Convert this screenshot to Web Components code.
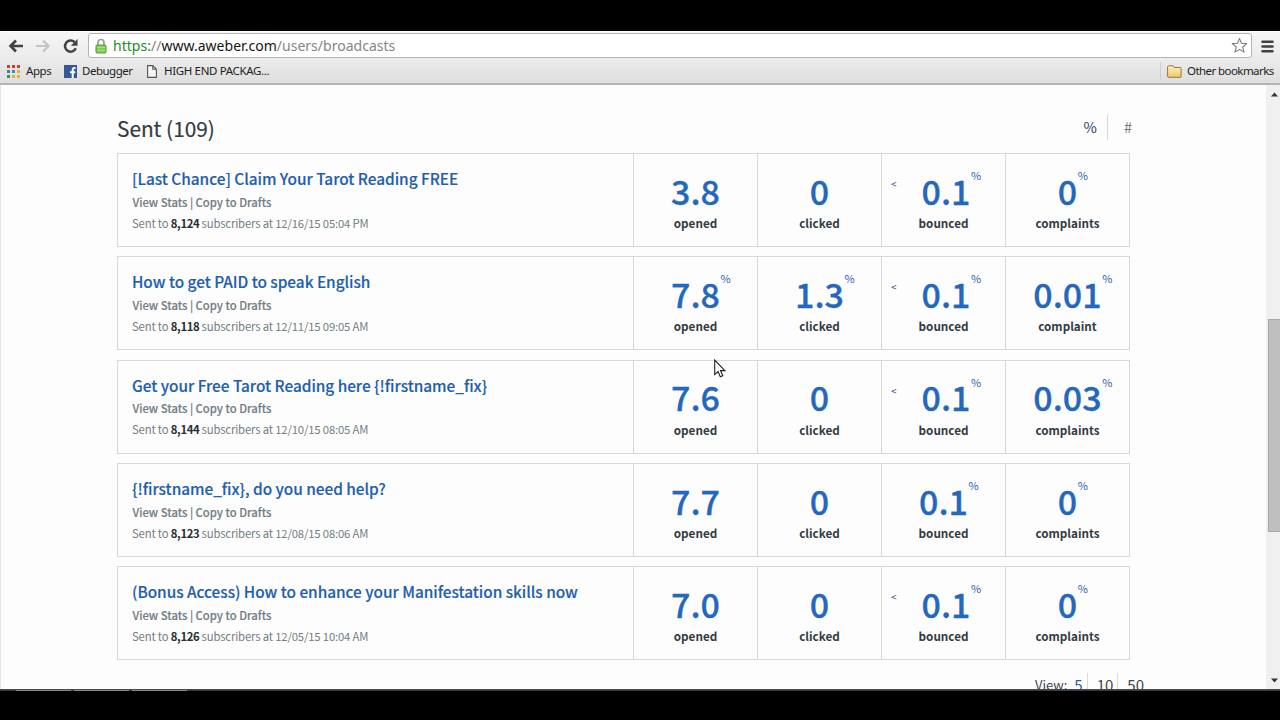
<!DOCTYPE html>
<html lang="en">
<head>
<meta charset="utf-8">
<title>Broadcasts</title>
<style>
html,body{margin:0;height:100%;background:#000;overflow:hidden}
body{--ui:"Noto Sans","Open Sans",sans-serif;--body:"Noto Sans CJK SC","Noto Sans",sans-serif;font-family:var(--body)}
</style>
</head>
<body>
<browser-window>
  <browser-toolbar slot="toolbar"></browser-toolbar>
  <bookmarks-bar slot="bookmarks"></bookmarks-bar>
  <broadcast-page></broadcast-page>
  <scroll-bar slot="scroll"></scroll-bar>
</browser-window>
<script>
const define = (name, html, setup) => customElements.define(name, class extends HTMLElement {
  constructor(){ super(); this.attachShadow({mode:'open'}); }
  connectedCallback(){
    this.shadowRoot.innerHTML = html;
    if (setup) setup(this.shadowRoot, this);
  }
});

define('browser-window', `
<style>
:host{display:flex;flex-direction:column;width:1280px;height:720px;box-sizing:border-box;padding:31px 0 29px;background:#000;position:relative}
.view{flex:1;display:flex;min-height:0;background:#fdfdfd;border-left:1px solid #e4e4e4;overflow:hidden}
.main{flex:1;min-width:0;overflow:hidden}
.edge{display:flex;gap:3px;height:2px;padding-left:16px;background:linear-gradient(#50545b,#2d3135)}
.edge i{width:55px;height:1px;margin-top:1px;background:#888}
.cursor{position:absolute;left:714px;top:359px}
</style>
<slot name="toolbar"></slot><slot name="bookmarks"></slot>
<div class="view"><div class="main"><slot></slot></div><slot name="scroll"></slot></div>
<div class="edge"><i></i><i></i><i></i></div>
<svg class="cursor" width="13" height="20" viewBox="0 0 13 20"><path d="M.7 1v14.6l3.3-3.1 2.3 5.3 2.5-1.1-2.3-5.1h4.4z" fill="#fff" stroke="#222" stroke-width="1.1"/></svg>`);

define('browser-toolbar', `
<style>
:host{display:flex;align-items:center;height:28px;background:linear-gradient(#f6f6f6,#ebebeb);border-top:1px solid #fff;box-sizing:border-box;font-family:var(--ui)}
svg{display:block;flex:none}
.nav{display:flex;align-items:center;gap:11px;padding:0 0 0 8px;width:88px;box-sizing:border-box}
.field{display:flex;align-items:center;width:1164px;height:25px;box-sizing:border-box;border:1px solid #b4b4b4;border-radius:3px;background:#fff;padding:0 3px 0 6px}
.url{flex:1;font-size:14px;line-height:22px;color:#858585;margin-left:6px;letter-spacing:.02px;white-space:pre;margin-top:1px}
.s{color:#188f1d}.h{color:#151515}
.menu{margin:1px 0 0 9px}
</style>
<div class="nav">
<svg width="16" height="14" viewBox="0 0 16 14" fill="none" stroke="#424242" stroke-width="2.6"><path d="M15 7H3M8 1.500 2.500 7 8 12.500"/></svg>
<svg width="16" height="14" viewBox="0 0 16 14" fill="none" stroke="#c4c4c4" stroke-width="2.2"><path d="M1 7h12M8 1.500 13.500 7 8 12.500"/></svg>
<svg width="16" height="16" viewBox="0 0 16 16"><path d="M13.800 10.200A5.600 5.600 0 1 1 12.500 4" fill="none" stroke="#424242" stroke-width="2.5"/><path d="M15.500 1v6.700H8.900z" fill="#424242"/></svg>
</div>
<div class="field">
<svg width="12" height="16" viewBox="0 0 12 16"><path d="M3 8V4.500a3 3 0 0 1 6 0V8" fill="none" stroke="#999" stroke-width="1.700"/><rect x="1" y="7" width="10" height="8" rx="1" fill="#82cf50" stroke="#5a9a38"/><path d="M2 9.500h8M2 12.500h8" stroke="#a8e07d"/></svg>
<span class="url"><span class="s">https:</span>//<span class="h">www.aweber.com</span>/users/broadcasts</span>
<svg width="17" height="17" viewBox="0 0 18 18"><path d="m9 1.500 2.100 5.100 5.600.4-4.300 3.600 1.400 5.400L9 13.100 4.200 16l1.400-5.400L1.300 7l5.600-.4z" fill="#fff" stroke="#777" stroke-width="1.100" stroke-linejoin="round"/></svg>
</div>
<svg class="menu" width="13" height="13" viewBox="0 0 13 13" stroke="#424242" stroke-width="2.600" stroke-linecap="round"><path d="M1.500 1.800h10M1.500 6.500h10M1.500 11.200h10"/></svg>`);

define('bookmarks-bar', `
<style>
:host{display:flex;align-items:center;height:26px;box-sizing:border-box;background:linear-gradient(#ebebeb,#dedede);border-bottom:2px solid #b4b4b4;font:11.500px/18px var(--ui);color:#222;padding:0 6px 0 7px;white-space:nowrap}
svg{display:block;flex:none}
span{display:block}
.apps{width:26px;margin:0 12px 0 6px;letter-spacing:-.4px}.dbg{width:52px;margin:0 13px 0 5px;letter-spacing:-.5px}.hi{margin-left:7px;letter-spacing:-.34px}
.ob{width:87px;letter-spacing:-.57px}
.other{display:flex;align-items:center;gap:5px;margin-left:auto;padding-left:6px;border-left:1px solid #ccd0dc}
</style>
<svg width="13" height="13" viewBox="0 0 13 13"><path fill="#cf3f36" d="M0 0h3v3H0zM5 0h3v3H5zM10 0h3v3h-3z"/><path fill="#36916a" d="M0 5h3v3H0zM0 10h3v3H0z"/><path fill="#4082d0" d="M5 5h3v3H5z"/><path fill="#e6b338" d="M10 5h3v3h-3zM5 10h3v3H5zM10 10h3v3h-3z"/></svg>
<span class="apps">Apps</span>
<svg width="13" height="13" viewBox="0 0 13 13"><path fill="#35579c" d="M0 0h13v13H0z"/><path d="M11.500 3H10.500Q8.700 3 8.700 5v8M6 7.300h5.300" fill="none" stroke="#fff" stroke-width="2"/></svg>
<span class="dbg">Debugger</span>
<svg width="10" height="13" viewBox="0 0 10 13"><path d="M.6.6h5.200l3.600 3.600v8.200H.6zM5.800.6v3.600h3.600" fill="#f5f5f5" stroke="#555" stroke-width="1.100"/></svg>
<span class="hi">HIGH END PACKAG...</span>
<div class="other"><svg width="15" height="13" viewBox="0 0 15 13"><defs><linearGradient id="f" x2="0" y2="1"><stop stop-color="#fff0b8"/><stop offset="1" stop-color="#efc76b"/></linearGradient></defs><path d="M.6 11.400V1.700q0-.9.9-.9h4.500q.7 0 .9.800l.3.900h6q.9 0 .9.900v8q0 .9-.9.900H1.500q-.9 0-.9-.9z" fill="url(#f)" stroke="#99773c"/></svg><span class="ob">Other bookmarks</span></div>`);

define('scroll-bar', `
<style>
:host{display:flex;flex-direction:column;align-items:center;width:14px;flex:none;box-sizing:border-box;height:100%;background:#f0f0f0;padding:7px 0 6px 2px}
.track{flex:1;width:100%;padding-top:222px;box-sizing:border-box}
.thumb{height:213px;box-sizing:border-box;background:#bfbfbf;border:1px solid #a9a9a9;border-right:0}
svg{display:block}
</style>
<svg width="7" height="5" viewBox="0 0 7 5"><path d="M0 4.500h7L3.500.5z" fill="#333"/></svg>
<div class="track"><div class="thumb"></div></div>
<svg width="7" height="5" viewBox="0 0 7 5"><path d="M0 .5h7L3.500 4.500z" fill="#333"/></svg>`);

define('stat-cell', `
<style>
:host{display:block;width:124px;box-sizing:border-box;border-left:1px solid #d8d8d8;text-align:center;position:relative;padding-top:12.600px}
.n{display:block;width:max-content;margin:0 auto;position:relative;font-size:34px;font-weight:500;line-height:48px;color:#2468bd;-webkit-text-stroke:.3px #2468bd}
.n.lt{left:2.500px}
.pct{position:absolute;left:100%;top:1.400px;margin-left:.5px;font-size:11px;line-height:14px;font-weight:400;-webkit-text-stroke:0;color:#2c5fae}
.less{position:absolute;left:9px;top:23px;font-size:10px;line-height:14px;color:#2c4f80}
.l{font-size:11.700px;line-height:18px;font-weight:700;color:#333c43;display:block;margin-top:-.6px}
</style>`, (root, host) => {
  const less = host.hasAttribute('less'), pct = host.hasAttribute('percent');
  root.innerHTML += `${less ? '<span class="less">&lt;</span>' : ''}<span class="n${less ? ' lt' : ''}">${host.getAttribute('value')}${pct ? '<span class="pct">%</span>' : ''}</span><span class="l">${host.getAttribute('label')}</span>`;
});

define('broadcast-row', `
<style>
:host{display:flex;height:94px;box-sizing:border-box;border:1px solid #d8d8d8;background:#fdfdfd}
.info{width:515px;box-sizing:border-box;padding:12px 0 0 14px;white-space:nowrap}
.t{font-size:15.400px;line-height:24px;font-weight:500;color:#1f5fae;letter-spacing:-.03px;-webkit-text-stroke:.15px #1f5fae}
.a{font-size:11.300px;line-height:20px;margin-top:1.700px;font-weight:500;color:#737d84;-webkit-text-stroke:.15px #737d84;padding-left:.5px;letter-spacing:-.02px}
.m{font-size:11.300px;line-height:20px;margin-top:1px;color:#737d84;letter-spacing:-.16px}
b{font-weight:700;color:#272f35;letter-spacing:-.4px}
</style>
<div class="info"><div class="t"></div><div class="a">View Stats | Copy to Drafts</div><div class="m">Sent to <b></b> subscribers at <span></span></div></div>
<slot></slot>`, (root, host) => {
  root.querySelector('.t').textContent = host.getAttribute('subject');
  root.querySelector('b').textContent = host.getAttribute('count');
  root.querySelector('.m span').textContent = host.getAttribute('date');
});

const broadcasts = [
  ['[Last Chance] Claim Your Tarot Reading FREE','8,124','12/16/15 05:04 PM',['3.8',0],['0',0],['0.1',1,1],['0',1],'complaints'],
  ['How to get PAID to speak English','8,118','12/11/15 09:05 AM',['7.8',1],['1.3',1],['0.1',1,1],['0.01',1],'complaint'],
  ['Get your Free Tarot Reading here {!firstname_fix}','8,144','12/10/15 08:05 AM',['7.6',0],['0',0],['0.1',1,1],['0.03',1],'complaints'],
  ['{!firstname_fix}, do you need help?','8,123','12/08/15 08:06 AM',['7.7',0],['0',0],['0.1',1,0],['0',1],'complaints'],
  ['(Bonus Access) How to enhance your Manifestation skills now','8,126','12/05/15 10:04 AM',['7.0',0],['0',0],['0.1',1,1],['0',1],'complaints']
];
const cell = ([v, p, l], label) => `<stat-cell value="${v}" label="${label}"${p ? ' percent' : ''}${l ? ' less' : ''}></stat-cell>`;

define('broadcast-page', `
<style>
:host{display:block;padding:28px 0 0 116px;width:1029px}
.head{display:flex;justify-content:space-between;height:40px;box-sizing:border-box;width:1015px}
h2{margin:-1px 0 0;font-size:20.800px;line-height:32px;font-weight:400;color:#333b41;-webkit-text-stroke:.2px #333b41}
.unit{display:flex;height:26px;margin-top:1px;font-size:14.500px;line-height:26px;color:#1f456f}
.unit span+span{border-left:1px solid #d8d8d8;margin-left:10px;padding-left:16px;color:#777}
.list{display:flex;flex-direction:column;gap:9.330px;width:1013px}
.pager{display:flex;justify-content:flex-end;margin-top:13px;font-size:15px;line-height:24px;color:#40474d;width:1027px}
.pager .v{font-size:13px;margin-right:7px}
.pager .p{padding-right:4px;margin-right:9px;border-right:1px solid #d8d8d8;height:20px}
.pager .cur{color:#2a5fa8}
</style>
<div class="head"><h2>Sent (109)</h2><div class="unit"><span>%</span><span>#</span></div></div>
<div class="list">${broadcasts.map(b => `<broadcast-row subject="${b[0]}" count="${b[1]}" date="${b[2]}">${cell(b[3],'opened')}${cell(b[4],'clicked')}${cell(b[5],'bounced')}${cell(b[6],b[7])}</broadcast-row>`).join('')}</div>
<div class="pager"><span class="v">View:</span><span class="p cur">5</span><span class="p">10</span><span>50</span></div>`);
</script>
</body>
</html>
